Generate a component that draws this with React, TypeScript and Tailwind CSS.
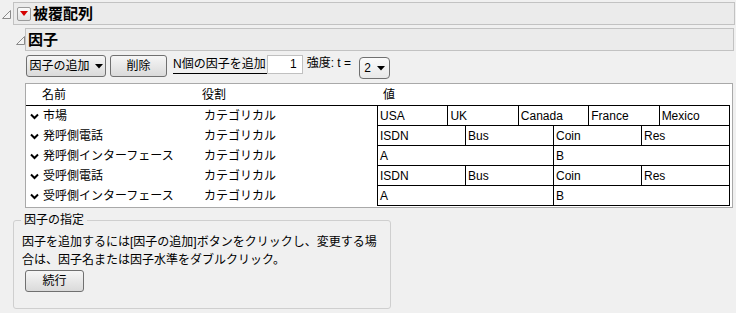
import React from "react";

type Row = {
    name: string;
    values: string[];
};

const ROWS: Row[] = [
    { name: "市場", values: ["USA", "UK", "Canada", "France", "Mexico"] },
    { name: "発呼側電話", values: ["ISDN", "Bus", "Coin", "Res"] },
    { name: "発呼側インターフェース", values: ["A", "B"] },
    { name: "受呼側電話", values: ["ISDN", "Bus", "Coin", "Res"] },
    { name: "受呼側インターフェース", values: ["A", "B"] },
];

const OutlineTriangle = () => (
    <svg width="9" height="9" viewBox="0 0 9 9">
        <polygon points="0.5,8.5 8.5,0.5 8.5,8.5" fill="#f4f4f4" stroke="#8a8a8a" strokeWidth="1" />
    </svg>
);

const Chevron = () => (
    <svg width="9" height="7" viewBox="0 0 9 7">
        <polyline points="1,1.5 4.5,5 8,1.5" fill="none" stroke="#000" strokeWidth="2" />
    </svg>
);

const Caret = () => (
    <svg width="8" height="5" viewBox="0 0 8 5">
        <polygon points="0,0 8,0 4,4.5" fill="#000" />
    </svg>
);

const btn =
    "h-[22px] flex items-center justify-center rounded-[3px] border border-[#707070] bg-linear-to-b from-[#f6f6f6] to-[#dadada] text-[12px] text-black";

export default function App() {
    return (
        <div className="w-[736px] h-[313px] overflow-hidden bg-[#f0f0f0] text-[12px] text-black font-['Liberation_Sans','Noto_Sans_CJK_JP',sans-serif]">
            {/* outline header */}
            <div className="flex items-center pt-[2px]">
                <div className="w-[13px] flex justify-center pt-[2px]">
                    <OutlineTriangle />
                </div>
                <div className="flex-1 h-[23px] flex items-center border border-[#c2c2c2] bg-[#ebebeb] mr-[1px]">
                    <div className="ml-[3px] w-[14px] h-[14px] flex items-center justify-center rounded-[2px] border border-[#9a9a9a] bg-linear-to-b from-[#fafafa] to-[#e2e2e2]">
                        <svg width="8" height="5" viewBox="0 0 8 5">
                            <polygon points="0,0 8,0 4,5" fill="#d40000" />
                        </svg>
                    </div>
                    <span className="ml-[2px] text-[15px] font-bold leading-none">被覆配列</span>
                </div>
            </div>

            <div className="flex items-center mt-[3px] pl-[15px]">
                <div className="w-[10px] flex justify-center pt-[2px]">
                    <OutlineTriangle />
                </div>
                <div className="flex-1 h-[23px] flex items-center border border-[#c2c2c2] bg-[#ebebeb] mr-[2px]">
                    <span className="ml-[2px] text-[15px] font-bold leading-none">因子</span>
                </div>
            </div>

            <div className="pl-[26px] pr-[4px]">
                {/* toolbar */}
                <div className="flex items-start mt-[4px] h-[25px]">
                    <button className={`${btn} w-[80px] gap-[5px]`}>
                        因子の追加 <Caret />
                    </button>
                    <button className={`${btn} w-[57px] ml-[4px]`}>削除</button>
                    <span className="ml-[6px] h-[19px] leading-[18px] border-b border-black pr-[1px]">
                        N個の因子を追加
                    </span>
                    <span className="h-[19px] w-[36px] border border-[#c0c0c0] bg-white text-right pr-[5px] leading-[17px]">
                        1
                    </span>
                    <span className="ml-[4px] leading-[16px]">強度: t =</span>
                    <button className={`${btn} mt-[2px] ml-[8px] w-[31px] rounded-[4px] gap-[6px] border-[#8a8a8a] from-[#fbfbfb] to-[#e8e8e8]`}>
                        2 <Caret />
                    </button>
                </div>

                {/* factor table */}
                <div className="mt-[3px] -ml-[1px] w-[708px] border border-[#a9a9a9] bg-white pb-[1px] pr-[2px]">
                    <div className="flex h-[22px] items-center border-b border-black">
                        <span className="w-[176px] pl-[16px]">名前</span>
                        <span className="w-[175px]">役割</span>
                        <span className="pl-[6px]">値</span>
                    </div>
                    {ROWS.map((row) => (
                        <div key={row.name} className="flex h-[20px]">
                            <div className="w-[178px] flex items-center pl-[4px] gap-[4px]">
                                <Chevron />
                                <span>{row.name}</span>
                            </div>
                            <div className="w-[173px] flex items-center">カテゴリカル</div>
                            <div className="flex-1 flex border-l border-b border-black">
                                {row.values.map((v) => (
                                    <div
                                        key={v}
                                        className="flex-1 flex items-center pl-[2px] border-r border-black"
                                    >
                                        {v}
                                    </div>
                                ))}
                            </div>
                        </div>
                    ))}
                </div>
            </div>

            {/* instructions group */}
            <fieldset className="ml-[13px] mt-[2px] w-[378px] h-[99px] border border-[#cfcfcf] rounded-[3px] px-[8px]">
                <legend className="ml-[-1px] px-[3px] leading-[20px]">因子の指定</legend>
                <p className="leading-[18px] mt-[3px]">
                    因子を追加するには[因子の追加]ボタンをクリックし、変更する場
                    <br />
                    合は、因子名または因子水準をダブルクリック。
                </p>
                <button className={`${btn} w-[59px] ml-[3px] mt-[1px]`}>続行</button>
            </fieldset>
        </div>
    );
}
